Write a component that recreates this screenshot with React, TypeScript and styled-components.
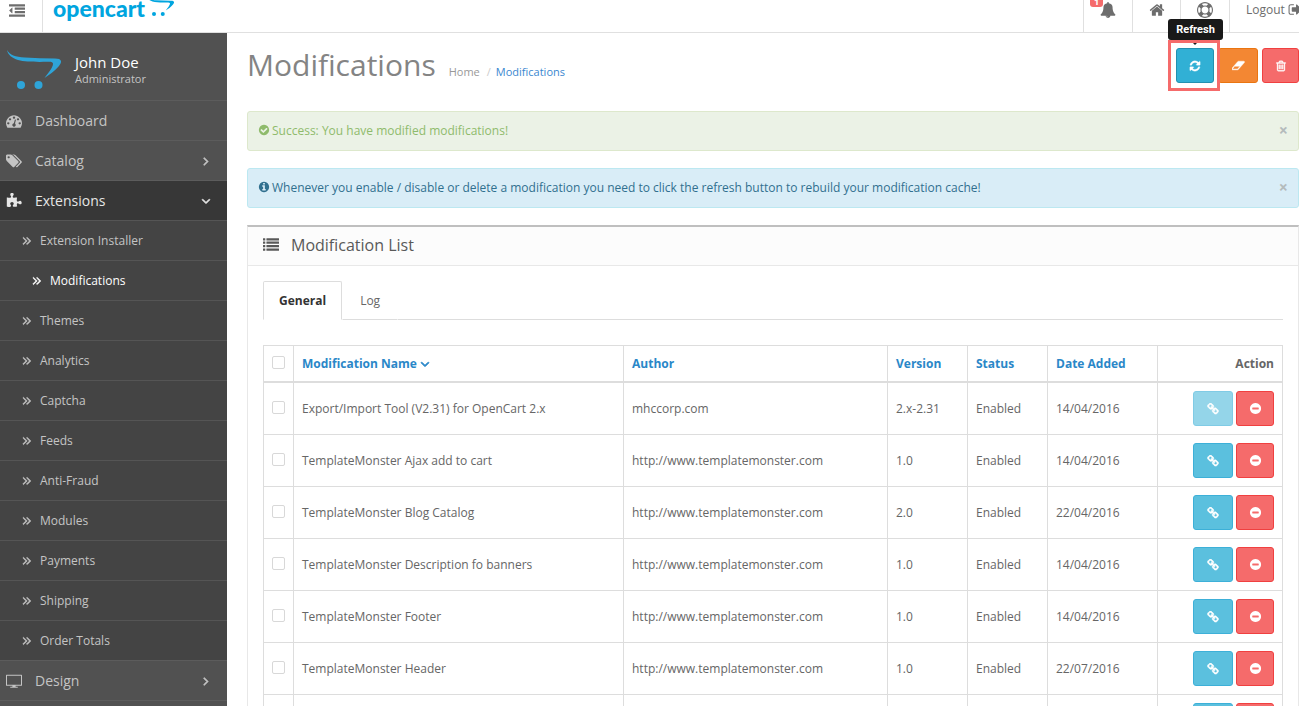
import React from "react";
import styled, { createGlobalStyle, css } from "styled-components";

const CIRCLE =
  "M1664 896q0 209-103 385.5t-279.5 279.5-385.5 103-385.5-103-279.5-279.5-103-385.5 103-385.5 279.5-279.5 385.5-103 385.5 103 279.5 279.5 103 385.5z";
const dot = (x: number, y: number) =>
  `M${x} ${y}q0-53-37.5-90.5t-90.5-37.5-90.5 37.5-37.5 90.5 37.5 90.5 90.5 37.5 90.5-37.5 37.5-90.5z`;
const bar = (x: number, y: number, w: number, h: number) =>
  `M${x + 32} ${y}h${w - 64}q32 0 32 32v${h - 64}q0 32-32 32h-${w - 64}q-32 0-32-32v-${h - 64}q0-32 32-32z`;
const trashLine = (x: number) =>
  `M${x} 736v576q0 14-9 23t-23 9h-64q-14 0-23-9t-9-23v-576q0-14 9-23t23-9h64q14 0 23 9t9 23z`;

const paths = {
  outdent:
    "M384 544v576q0 13-9.5 22.5t-22.5 9.5q-14 0-23-9l-288-288q-9-9-9-23t9-23l288-288q9-9 23-9 13 0 22.5 9.5t9.5 22.5z" +
    bar(0, 128, 1792, 256) + bar(640, 512, 1152, 256) + bar(640, 896, 1152, 256) + bar(0, 1280, 1792, 256),
  list: [128, 512, 896, 1280].map((y) => bar(0, y, 256, 256) + bar(384, y, 1408, 256)).join(""),
  refresh:
    "M1639 1056q0 5-1 7-64 268-268 434.5t-478 166.5q-146 0-282.5-55t-243.5-157l-129 129q-19 19-45 19t-45-19-19-45v-448q0-26 19-45t45-19h448q26 0 45 19t19 45-19 45l-137 137q71 66 161 102t187 36q134 0 250-65t186-179q11-17 53-117 8-23 30-23h192q13 0 22.5 9.5t9.5 22.5zm25-800v448q0 26-19 45t-45 19h-448q-26 0-45-19t-19-45 19-45l138-138q-148-137-349-137-134 0-250 65t-186 179q-11 17-53 117-8 23-30 23h-199q-13 0-22.5-9.5t-9.5-22.5v-7q65-268 270-434.5t480-166.5q146 0 284 55.5t245 156.5l130-129q19-19 45-19t45 19 19 45z",
  home:
    "M1472 992v480q0 26-19 45t-45 19h-384v-384h-256v384h-384q-26 0-45-19t-19-45v-480q0-1 .5-3t.5-3l575-474 575 474q1 2 1 6zm223-69l-62 74q-8 9-21 11h-3q-13 0-21-7l-692-577-692 577q-12 8-24 7-13-2-21-11l-62-74q-8-10-7-23.5t11-21.5l719-599q32-26 76-26t76 26l244 204v-195q0-14 9-23t23-9h192q14 0 23 9t9 23v408l219 182q10 8 11 21.5t-7 23.5z",
  trash:
    trashLine(704) + trashLine(960) + trashLine(1216) +
    "M1344 1460v-948h-896v948q0 22 7 40.5t14.5 27 10.5 8.5h832q3 0 10.5-8.5t14.5-27 7-40.5zm-672-1076h448l-48-117q-7-9-17-11h-317q-10 2-17 11zm928 32v64q0 14-9 23t-23 9h-96v948q0 83-47 143.5t-113 60.5h-832q-66 0-113-58.5t-47-141.5v-952h-96q-14 0-23-9t-9-23v-64q0-14 9-23t23-9h309l70-167q15-37 54-63t79-26h320q40 0 79 26t54 63l70 167h309q14 0 23 9t9 23z",
  minus:
    "M1344 960v-128q0-26-19-45t-45-19h-768q-26 0-45 19t-19 45v128q0 26 19 45t45 19h768q26 0 45-19t19-45z" + CIRCLE,
  check:
    "M1412 734q0-28-18-46l-91-90q-19-19-45-19t-45 19l-408 407-226-226q-19-19-45-19t-45 19l-91 90q-18 18-18 46 0 27 18 45l362 362q19 19 45 19 27 0 46-19l543-543q18-18 18-45z" + CIRCLE,
  info:
    "M1152 1376v-160q0-14-9-23t-23-9h-96v-512q0-14-9-23t-23-9h-320q-14 0-23 9t-9 23v160q0 14 9 23t23 9h96v320h-96q-14 0-23 9t-9 23v160q0 14 9 23t23 9h448q14 0 23-9t9-23zm-128-896v-160q0-14-9-23t-23-9h-192q-14 0-23 9t-9 23v160q0 14 9 23t23 9h192q14 0 23-9t9-23z" + CIRCLE,
  eraser:
    "M832 1408l336-384h-768l-336 384h768zm1013-1077q15 34 9.5 71.5t-30.5 65.5l-896 1024q-38 44-96 44h-768q-38 0-69.5-20.5t-47.5-54.5q-15-34-9.5-71.5t30.5-65.5l896-1024q38-44 96-44h768q38 0 69.5 20.5t47.5 54.5z",
  bell:
    "M912 1696q0-16-16-16-59 0-101.5-42.5t-42.5-101.5q0-16-16-16t-16 16q0 73 51.5 124.5t124.5 51.5q16 0 16-16zm816-288q0 52-38 90t-90 38h-448q0 106-75 181t-181 75-181-75-75-181h-448q-52 0-90-38t-38-90q50-42 91-88t85-119.5 74.5-158.5 50-206 19.5-260q0-152 117-282.5t307-158.5q-8-19-8-39 0-40 28-68t68-28 68 28 28 68q0 20-8 39 190 28 307 158.5t117 282.5q0 139 19.5 260t50 206 74.5 158.5 85 119.5 91 88z",
  ring:
    "M896 0q182 0 348 71t286 191 191 286 71 348-71 348-191 286-286 191-348 71-348-71-286-191-191-286-71-348 71-348 191-286 286-191 348-71zm0 128q-190 0-361 90l194 194q82-28 167-28t167 28l194-194q-171-90-361-90zm-678 1129l194-194q-28-82-28-167t28-167l-194-194q-90 171-90 361t90 361zm678 407q190 0 361-90l-194-194q-82 28-167 28t-167-28l-194 194q171 90 361 90zm0-384q159 0 271.5-112.5t112.5-271.5-112.5-271.5-271.5-112.5-271.5 112.5-112.5 271.5 112.5 271.5 271.5 112.5zm484-217l194 194q90-171 90-361t-90-361l-194 194q28 82 28 167t-28 167z",
  right:
    "M1171 960q0 13-10 23l-466 466q-10 10-23 10t-23-10l-50-50q-10-10-10-23t10-23l393-393-393-393q-10-10-10-23t10-23l50-50q10-10 23-10t23 10l466 466q10 10 10 23z",
  down:
    "M1395 736q0 13-10 23l-466 466q-10 10-23 10t-23-10l-466-466q-10-10-10-23t10-23l50-50q10-10 23-10t23 10l393 393 393-393q10-10 23-10t23 10l50 50q10 10 10 23z",
  double:
    "M979 960q0 13-10 23l-466 466q-10 10-23 10t-23-10l-50-50q-10-10-10-23t10-23l393-393-393-393q-10-10-10-23t10-23l50-50q10-10 23-10t23 10l466 466q10 10 10 23zM1483 960q0 13-10 23l-466 466q-10 10-23 10t-23-10l-50-50q-10-10-10-23t10-23l393-393-393-393q-10-10-10-23t10-23l50-50q10-10 23-10t23 10l466 466q10 10 10 23z",
  link:
    "M1520 1216q0-40-28-68l-208-208q-28-28-68-28-42 0-72 32 3 3 19 18.5t21.5 21.5 15 19 13 25.5 3.5 27.5q0 40-28 68t-68 28q-15 0-27.5-3.5t-25.5-13-19-15-21.5-21.5-18.5-19q-33 31-33 73 0 40 28 68l206 207q27 27 68 27 40 0 68-26l147-146q28-28 28-67zm-703-705q0-40-28-68l-206-207q-28-28-68-28-39 0-68 27l-147 146q-28 28-28 67 0 40 28 68l208 208q27 27 68 27 42 0 72-31-3-3-19-18.5t-21.5-21.5-15-19-13-25.5-3.5-27.5q0-40 28-68t68-28q15 0 27.5 3.5t25.5 13 19 15 21.5 21.5 18.5 19q33-31 33-73zm895 705q0 120-85 203l-147 146q-83 83-203 83-121 0-204-85l-206-207q-83-83-83-203 0-123 88-209l-88-88q-86 88-208 88-120 0-204-84l-208-208q-84-84-84-204t85-203l147-146q83-83 203-83 121 0 204 85l206 207q83 83 83 203 0 123-88 209l88 88q86-88 208-88 120 0 204 84l208 208q84 84 84 204z",
  gauge:
    dot(384, 1152) + dot(576, 704) + dot(1664, 1152) + dot(1024, 512) + dot(1472, 704) +
    "M1004 1185l101-382q6-26-7.5-48.5t-38.5-29.5-48 6.5-30 39.5l-101 382q-60 5-107 43.5t-63 98.5q-20 77 20 146t117 89 146-20 89-117q16-60-6-117t-72-91zM1792 1152q0 261-141 483-19 29-54 29h-1402q-35 0-54-29-141-221-141-483 0-182 71-348t191-286 286-191 348-71 348 71 286 191 191 286 71 348z",
  tags:
    "M448 448q0-53-37.5-90.5t-90.5-37.5-90.5 37.5-37.5 90.5 37.5 90.5 90.5 37.5 90.5-37.5 37.5-90.5zm1067 576q0 53-37 90l-491 492q-39 37-91 37-53 0-90-37l-715-716q-38-37-64.5-101t-26.5-117v-416q0-52 38-90t90-38h416q53 0 117 26.5t102 64.5l715 714q37 39 37 91zm384 0q0 53-37 90l-491 492q-39 37-91 37-36 0-59-14t-53-45l470-470q37-37 37-90 0-52-37-91l-715-714q-38-38-102-64.5t-117-26.5h224q53 0 117 26.5t102 64.5l715 714q37 39 37 91z",
  puzzle:
    "M1755 1083q0 81-44.5 135t-123.5 54q-41 0-77.5-17.5t-59-38-56.5-38-71-17.5q-110 0-110 124 0 39 16 115t15 115v5q-22 0-33 1-34 3-97.5 11.5t-115.5 13.5-98 5q-61 0-103-26.5t-42-83.5q0-37 17.5-71t38-56.5 38-59 17.5-77.5q0-79-54-123.5t-135-44.5q-84 0-143 45.5t-59 127.5q0 43 15 83t33.5 64.5 33.5 53 15 50.5q0 45-46 89-37 35-117 35-95 0-245-24-9-2-27.5-4t-27.5-4l-13-2q-1 0-3-1-2 0-2-1v-1024q2 1 17.5 3.5t34 5 21.5 3.5q150 24 245 24 80 0 117-35 46-44 46-89 0-22-15-50.5t-33.5-53-33.5-64.5-15-83q0-82 59-127.5t144-45.5q80 0 134 44.5t54 123.5q0 41-17.5 77.5t-38 59-38 56.5-17.5 71q0 57 42 83.5t103 26.5q64 0 180-15t163-17v2q-1 2-3.5 17.5t-5 34-3.5 21.5q-24 150-24 245 0 80 35 117 44 46 89 46 22 0 50.5-15t53-33.5 64.5-33.5 83-15q82 0 127.5 59t45.5 143z",
  signout:
    "M704 1440q0 4 1 20t.5 26.5-3 23.5-10 19.5-20.5 6.5h-320q-119 0-203.5-84.5t-84.5-203.5v-704q0-119 84.5-203.5t203.5-84.5h320q13 0 22.5 9.5t9.5 22.5q0 4 1 20t.5 26.5-3 23.5-10 19.5-20.5 6.5h-320q-66 0-113 47t-47 113v704q0 66 47 113t113 47h312l11.5 1 11.5 3 8 5.5 7 9 2 13.5zm928-544q0 26-19 45l-544 544q-19 19-45 19t-45-19-19-45v-288h-448q-26 0-45-19t-19-45v-384q0-26 19-45t45-19h448v-288q0-26 19-45t45-19 45 19l544 544q19 19 19 45z",
  desktop:
    "M0 224q0-64 64-64h1792q64 0 64 64v1184q0 64-64 64h-704v128h256v120h-896v-120h256v-128h-704q-64 0-64-64zM120 280v1072h1680v-1072z",
};

type IconName = keyof typeof paths;
const Glyph = styled.svg<{ $size: number; $bold: number }>`
  display: block;
  flex: none;
  width: ${(p) => p.$size}px;
  height: ${(p) => p.$size}px;
  fill: currentColor;
  fill-rule: evenodd;
  stroke: currentColor;
  stroke-width: ${(p) => p.$bold};
`;
const wide: IconName[] = ["eraser", "tags", "desktop"];
const Icon = ({ name, size = 12, bold = 0 }: { name: IconName; size?: number; bold?: number }) => (
  <Glyph
    $size={size}
    $bold={bold}
    viewBox={wide.includes(name) ? "0 0 1920 1792" : "0 0 1792 1792"}
    aria-hidden="true"
  >
    <path d={paths[name]} />
  </Glyph>
);

const CartShape = () => (
  <>
    <path d="M0 0C3 5 8 7 18 7.500C28 8 38 8.500 48 8.500C54 8.500 56 11 52 16C48 21 42 25 37.500 28C42 22 46 17 46 14C46 12 44 11.800 40 11.800C30 12 18 12 11 10C5 8 1 5 0 0Z" />
    <circle cx="14" cy="35" r="4" />
    <circle cx="31.500" cy="35" r="4" />
  </>
);

const GlobalStyle = createGlobalStyle`
  *, *::before, *::after { box-sizing: border-box; }
  body {
    margin: 0;
    background: #fff;
    color: #666;
    font: 12px/17px "Open Sans", "Noto Sans", sans-serif;
  }
  a { color: inherit; text-decoration: none; }
  button { font: inherit; cursor: pointer; }
  h1, h2, p, ul { margin: 0; padding: 0; }
`;

const Page = styled.div`
  height: 100vh;
  overflow: hidden;
`;
const Header = styled.header`
  display: flex;
  height: 33px;
  border-bottom: 1px solid #e0e0e0;
`;
const MenuToggle = styled.button`
  display: flex;
  width: 43px;
  padding: 3px 0 0 9px;
  border: 0;
  border-right: 1px solid #e0e0e0;
  background: none;
  color: #6d6d6d;
`;
const Logo = styled.a`
  display: flex;
  flex: 1;
  padding-left: 10px;
  color: #00a5df;
  font: 900 23px/16px Lato, sans-serif;
`;
const LogoCart = styled.svg`
  width: 27px;
  height: 20px;
  margin-left: 2px;
  fill: currentColor;
`;
const HeaderLink = styled.a<{ $width: number }>`
  position: relative;
  display: flex;
  flex: none;
  align-items: center;
  justify-content: center;
  gap: 3px;
  width: ${(p) => p.$width}px;
  padding-bottom: 12px;
  border-left: 1px solid #e0e0e0;
  color: #6d6d6d;
`;
const LogoutLink = styled(HeaderLink)`
  justify-content: flex-start;
  padding-bottom: 13px;
  padding-left: 16px;
  overflow: hidden;
`;
const Badge = styled.span`
  position: absolute;
  top: 0;
  left: 6px;
  width: 13px;
  height: 7px;
  border-radius: 0 0 3px 3px;
  background: #f56b6b;
  color: #fff;
  font-weight: 700;
  font-size: 9px;
  line-height: 4px;
  text-align: center;
`;

const Body = styled.div`
  display: flex;
  align-items: stretch;
`;
const Sidebar = styled.nav`
  flex: none;
  width: 227px;
  background: #515151;
  color: #c4c4c4;
`;
const Profile = styled.div`
  display: flex;
  gap: 14px;
  height: 67px;
  padding: 17px 0 0 7px;
`;
const ProfileCart = styled.svg`
  width: 54px;
  height: 40px;
  fill: #2ea4d8;
`;
const ProfileName = styled.p`
  padding-top: 2px;
  color: #fff;
  font-size: 15px;
  line-height: 20px;
`;
const ProfileRole = styled.p`
  font-size: 11px;
  line-height: 14px;
`;
const NavLink = styled.a<{ $open?: boolean }>`
  display: flex;
  align-items: center;
  height: 40px;
  padding: 0 14px 0 6px;
  border-top: 1px solid #5c5c5c;
  font-size: 14px;
  ${(p) => p.$open && css`background: #373737; color: #e6e6e6;`}
`;
const NavLabel = styled.span`
  flex: 1;
  padding-left: 13px;
`;
const SubLink = styled.a<{ $active?: boolean }>`
  display: flex;
  align-items: center;
  gap: 7px;
  height: 40px;
  padding-left: ${(p) => (p.$active ? 30 : 20)}px;
  border-top: 1px solid #555;
  background: #444;
  color: ${(p) => (p.$active ? "#fff" : "#c4c4c4")};
`;

const Main = styled.main`
  flex: 1;
  min-width: 0;
  padding: 15px 0 0 20px;
`;
const TitleRow = styled.div`
  display: flex;
  justify-content: space-between;
  height: 63px;
`;
const TitleGroup = styled.div`
  display: flex;
  align-items: baseline;
  gap: 13px;
`;
const Title = styled.h1`
  color: #848484;
  font-weight: 400;
  font-size: 30px;
  line-height: 34px;
`;
const Breadcrumb = styled.nav`
  display: flex;
  gap: 5px;
  color: #999;
  font-size: 11px;
`;
const Slash = styled.span`
  padding-left: 2px;
  color: #ccc;
`;
const Current = styled.a`
  color: #3a87d0;
`;
const Actions = styled.div`
  display: flex;
  gap: 4px;
`;

const tones = {
  refresh: ["#31b0d5", "#2390b0"],
  clear: ["#f38733", "#ea7510"],
  danger: ["#f56b6b", "#f04040"],
  link: ["#5bc0de", "#3db0d8"],
};
const Button = styled.button<{ $tone: keyof typeof tones; $width?: number }>`
  display: flex;
  align-items: center;
  justify-content: center;
  width: ${(p) => p.$width ?? 38}px;
  height: 35px;
  padding: 0;
  border: 1px solid ${(p) => tones[p.$tone][1]};
  border-radius: 3px;
  background: ${(p) => tones[p.$tone][0]};
  color: #fff;
  &:disabled { opacity: 0.65; }
`;
const Highlight = styled.div`
  position: relative;
  z-index: 1;
  &::after {
    content: "";
    position: absolute;
    top: -8px;
    left: -8px;
    width: 52px;
    height: 51px;
    border: 3px solid #f56b6b;
    pointer-events: none;
  }
`;
const HighlightGap = styled.div`
  position: absolute;
  top: -5px;
  left: -5px;
  width: 46px;
  height: 45px;
  background: #fff;
`;
const RefreshButton = styled(Button)`
  position: relative;
`;
const Tooltip = styled.div`
  position: absolute;
  z-index: 1;
  top: -29px;
  left: -8px;
  width: 55px;
  height: 21px;
  border-radius: 3px;
  background: #191919;
  color: #fff;
  font: 700 11px/21px Roboto, sans-serif;
  text-align: center;
`;
const TooltipArrow = styled.div`
  position: absolute;
  top: -5px;
  left: 17px;
  border: 2px solid transparent;
  border-top-color: #191919;
  border-bottom: 0;
`;

const Alert = styled.div<{ $success?: boolean }>`
  display: flex;
  align-items: center;
  gap: 2px;
  height: 40px;
  margin-bottom: 17px;
  padding: 0 10px 2px;
  border: 1px solid ${(p) => (p.$success ? "#dde8cc" : "#bce8f1")};
  border-radius: 3px;
  background: ${(p) => (p.$success ? "#ebf2e6" : "#d9edf7")};
  color: ${(p) => (p.$success ? "#8fbb6c" : "#31708f")};
`;
const AlertText = styled.span`
  flex: 1;
`;
const Close = styled.button`
  padding: 1px 0 0;
  border: 0;
  background: none;
  color: #b4bbbc;
  font-weight: 700;
  font-size: 16px;
`;

const Panel = styled.section`
  border: 1px solid #e8e8e8;
  border-top: 2px solid #bfbfbf;
`;
const PanelHead = styled.div`
  display: flex;
  align-items: center;
  gap: 12px;
  height: 39px;
  padding: 0 0 2px 15px;
  border-bottom: 1px solid #e8e8e8;
  background: #fcfcfc;
  color: #595959;
`;
const PanelTitle = styled.h2`
  font-weight: 400;
  font-size: 16px;
`;
const PanelBody = styled.div`
  padding: 15px;
`;
const Tabs = styled.div`
  display: flex;
  height: 39px;
  margin-bottom: 25px;
  border-bottom: 1px solid #ddd;
`;
const Tab = styled.button<{ $active?: boolean }>`
  height: 39px;
  padding: 0 ${(p) => (p.$active ? 15 : 17)}px;
  border: 1px solid ${(p) => (p.$active ? "#ddd" : "transparent")};
  border-bottom-color: ${(p) => (p.$active ? "#fff" : "#ddd")};
  border-radius: 2px 2px 0 0;
  background: #fff;
  color: ${(p) => (p.$active ? "#333" : "#666")};
  font-weight: ${(p) => (p.$active ? 700 : 400)};
`;

const Table = styled.table`
  width: 100%;
  table-layout: fixed;
  border-collapse: collapse;
`;
const Col = styled.col<{ $width?: number }>`
  width: ${(p) => (p.$width ? `${p.$width}px` : "auto")};
`;
const Th = styled.th<{ $plain?: boolean }>`
  padding: 9px 8px;
  border: 1px solid #ddd;
  border-bottom-width: 2px;
  color: ${(p) => (p.$plain ? "#666" : "#2a87c8")};
  font-weight: 700;
  text-align: ${(p) => (p.$plain ? "right" : "left")};
`;
const SortLink = styled.a`
  display: flex;
  align-items: center;
  gap: 1px;
`;
const Td = styled.td`
  padding: 8px;
  border: 1px solid #ddd;
`;
const Check = styled.input`
  display: block;
  appearance: none;
  width: 13px;
  height: 13px;
  margin: 0 0 2px;
  border: 1px solid #d8d8d8;
  border-radius: 2px;
  background: #fff;
`;
const RowActions = styled.div`
  display: flex;
  justify-content: flex-end;
  gap: 3px;
`;

const subItems = [
  "Extension Installer", "Modifications", "Themes", "Analytics", "Captcha", "Feeds",
  "Anti-Fraud", "Modules", "Payments", "Shipping", "Order Totals",
];
const TM = "http://www.templatemonster.com";
const rows = [
  ["Export/Import Tool (V2.31) for OpenCart 2.x", "mhccorp.com", "2.x-2.31", "14/04/2016"],
  ["TemplateMonster Ajax add to cart", TM, "1.0", "14/04/2016"],
  ["TemplateMonster Blog Catalog", TM, "2.0", "22/04/2016"],
  ["TemplateMonster Description fo banners", TM, "1.0", "14/04/2016"],
  ["TemplateMonster Footer", TM, "1.0", "14/04/2016"],
  ["TemplateMonster Header", TM, "1.0", "22/07/2016"],
  ["", "", "", ""],
];

export default function App() {
  return (
    <Page>
      <GlobalStyle />
      <Header>
        <MenuToggle aria-label="Toggle menu"><Icon name="outdent" size={16} /></MenuToggle>
        <Logo href="#">
          opencart
          <LogoCart viewBox="0 7 54 40" aria-hidden="true"><CartShape /></LogoCart>
        </Logo>
        <HeaderLink href="#" $width={49} aria-label="Notifications">
          <Icon name="bell" size={16} />
          <Badge>1</Badge>
        </HeaderLink>
        <HeaderLink href="#" $width={48} aria-label="Home"><Icon name="home" size={16} /></HeaderLink>
        <HeaderLink href="#" $width={49} aria-label="Help"><Icon name="ring" size={16} /></HeaderLink>
        <LogoutLink href="#" $width={70}>Logout <Icon name="signout" size={15} /></LogoutLink>
      </Header>
      <Body>
        <Sidebar>
          <Profile>
            <ProfileCart viewBox="0 0 54 40" aria-hidden="true"><CartShape /></ProfileCart>
            <div>
              <ProfileName>John Doe</ProfileName>
              <ProfileRole>Administrator</ProfileRole>
            </div>
          </Profile>
          <NavLink href="#"><Icon name="gauge" size={16} /><NavLabel>Dashboard</NavLabel></NavLink>
          <NavLink href="#"><Icon name="tags" size={16} /><NavLabel>Catalog</NavLabel><Icon name="right" size={14} bold={90} /></NavLink>
          <NavLink href="#" $open><Icon name="puzzle" size={16} /><NavLabel>Extensions</NavLabel><Icon name="down" size={14} bold={90} /></NavLink>
          {subItems.map((label) => (
            <SubLink key={label} href="#" $active={label === "Modifications"}>
              <Icon name="double" size={13} bold={80} />{label}
            </SubLink>
          ))}
          <NavLink href="#"><Icon name="desktop" size={16} /><NavLabel>Design</NavLabel><Icon name="right" size={14} bold={90} /></NavLink>
          <NavLink href="#" aria-label="Sales" />
        </Sidebar>
        <Main>
          <TitleRow>
            <TitleGroup>
              <Title>Modifications</Title>
              <Breadcrumb>
                <a href="#">Home</a><Slash>/</Slash><Current href="#">Modifications</Current>
              </Breadcrumb>
            </TitleGroup>
            <Actions>
              <Highlight>
                <HighlightGap />
                <RefreshButton $tone="refresh" aria-label="Refresh"><Icon name="refresh" bold={50} /></RefreshButton>
                <Tooltip role="tooltip">Refresh</Tooltip>
                <TooltipArrow />
              </Highlight>
              <Button $tone="clear" $width={40} aria-label="Clear"><Icon name="eraser" size={13} bold={60} /></Button>
              <Button $tone="danger" $width={37} aria-label="Delete"><Icon name="trash" bold={60} /></Button>
            </Actions>
          </TitleRow>
          <Alert $success>
            <Icon name="check" />
            <AlertText>Success: You have modified modifications!</AlertText>
            <Close aria-label="Close">×</Close>
          </Alert>
          <Alert>
            <Icon name="info" />
            <AlertText>
              Whenever you enable / disable or delete a modification you need to click the refresh button to rebuild your modification cache!
            </AlertText>
            <Close aria-label="Close">×</Close>
          </Alert>
          <Panel>
            <PanelHead><Icon name="list" size={16} /><PanelTitle>Modification List</PanelTitle></PanelHead>
            <PanelBody>
              <Tabs role="tablist">
                <Tab role="tab" $active>General</Tab>
                <Tab role="tab">Log</Tab>
              </Tabs>
              <Table>
                <colgroup>
                  <Col $width={30} /><Col /><Col $width={264} /><Col $width={80} />
                  <Col $width={80} /><Col $width={110} /><Col $width={125} />
                </colgroup>
                <thead>
                  <tr>
                    <Th><Check type="checkbox" aria-label="Select all" /></Th>
                    <Th><SortLink href="#">Modification Name <Icon name="down" size={14} bold={110} /></SortLink></Th>
                    <Th><a href="#">Author</a></Th>
                    <Th><a href="#">Version</a></Th>
                    <Th><a href="#">Status</a></Th>
                    <Th><a href="#">Date Added</a></Th>
                    <Th $plain>Action</Th>
                  </tr>
                </thead>
                <tbody>
                  {rows.map(([name, author, version, date], i) => (
                    <tr key={i}>
                      <Td><Check type="checkbox" aria-label={`Select ${name}`} /></Td>
                      <Td>{name}</Td>
                      <Td>{author}</Td>
                      <Td>{version}</Td>
                      <Td>{name && "Enabled"}</Td>
                      <Td>{date}</Td>
                      <Td>
                        <RowActions>
                          <Button $tone="link" $width={40} disabled={i === 0} aria-label="Link"><Icon name="link" bold={90} /></Button>
                          <Button $tone="danger" aria-label="Disable"><Icon name="minus" size={13} /></Button>
                        </RowActions>
                      </Td>
                    </tr>
                  ))}
                </tbody>
              </Table>
            </PanelBody>
          </Panel>
        </Main>
      </Body>
    </Page>
  );
}
